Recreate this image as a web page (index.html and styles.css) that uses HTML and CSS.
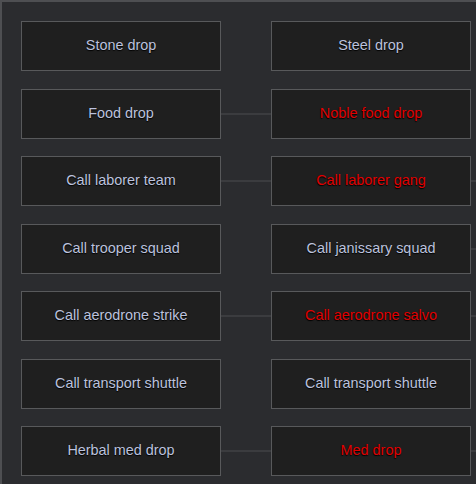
FILE: index.html
```html
<!DOCTYPE html>
<html lang="en">
<head>
    <meta charset="UTF-8">
    <title>Drops</title>
    <link rel="stylesheet" href="styles.css">
</head>
<body>
    <div class="panel">
        <div class="tree">
            <div class="node">Stone drop</div>
            <div class="gap"></div>
            <div class="node">Steel drop</div>
            <div class="gap"></div>

            <div class="node">Food drop</div>
            <div class="gap"><div class="line"></div></div>
            <div class="node red">Noble food drop</div>
            <div class="gap"></div>

            <div class="node">Call laborer team</div>
            <div class="gap"><div class="line"></div></div>
            <div class="node red">Call laborer gang</div>
            <div class="gap"><div class="line"></div></div>

            <div class="node">Call trooper squad</div>
            <div class="gap"></div>
            <div class="node">Call janissary squad</div>
            <div class="gap"><div class="line"></div></div>

            <div class="node">Call aerodrone strike</div>
            <div class="gap"><div class="line"></div></div>
            <div class="node red">Call aerodrone salvo</div>
            <div class="gap"><div class="line"></div></div>

            <div class="node">Call transport shuttle</div>
            <div class="gap"></div>
            <div class="node">Call transport shuttle</div>
            <div class="gap"></div>

            <div class="node">Herbal med drop</div>
            <div class="gap"><div class="line"></div></div>
            <div class="node red">Med drop</div>
            <div class="gap"><div class="line"></div></div>
        </div>
    </div>
</body>
</html>
```

FILE: styles.css
```css
html, body {
    margin: 0;
    height: 100%;
    background-color: #2b2c2f;
}
body {
    font-family: "Liberation Sans", Arial, sans-serif;
    overflow: hidden;
}
.panel {
    height: 100%;
    box-sizing: border-box;
    border-top: 2px solid #4e4f52;
    border-left: 2px solid #4e4f52;
    padding: 19px 0 0 19px;
}
.tree {
    display: grid;
    grid-template-columns: 200px 50px 200px 1fr;
    grid-auto-rows: 50px;
    row-gap: 17.5px;
}
.node {
    box-sizing: border-box;
    background-color: #1f1f1f;
    border: 1px solid #58595b;
    color: #bcc2de;
    font-size: 14.4px;
    padding-bottom: 2px;
    display: flex;
    align-items: center;
    justify-content: center;
    text-shadow: 0 1px 1px #000;
}
.red {
    color: #e00000;
}
.gap {
    display: flex;
    align-items: center;
}
.line {
    width: 100%;
    height: 2px;
    background-color: #3b3c3f;
}
```
